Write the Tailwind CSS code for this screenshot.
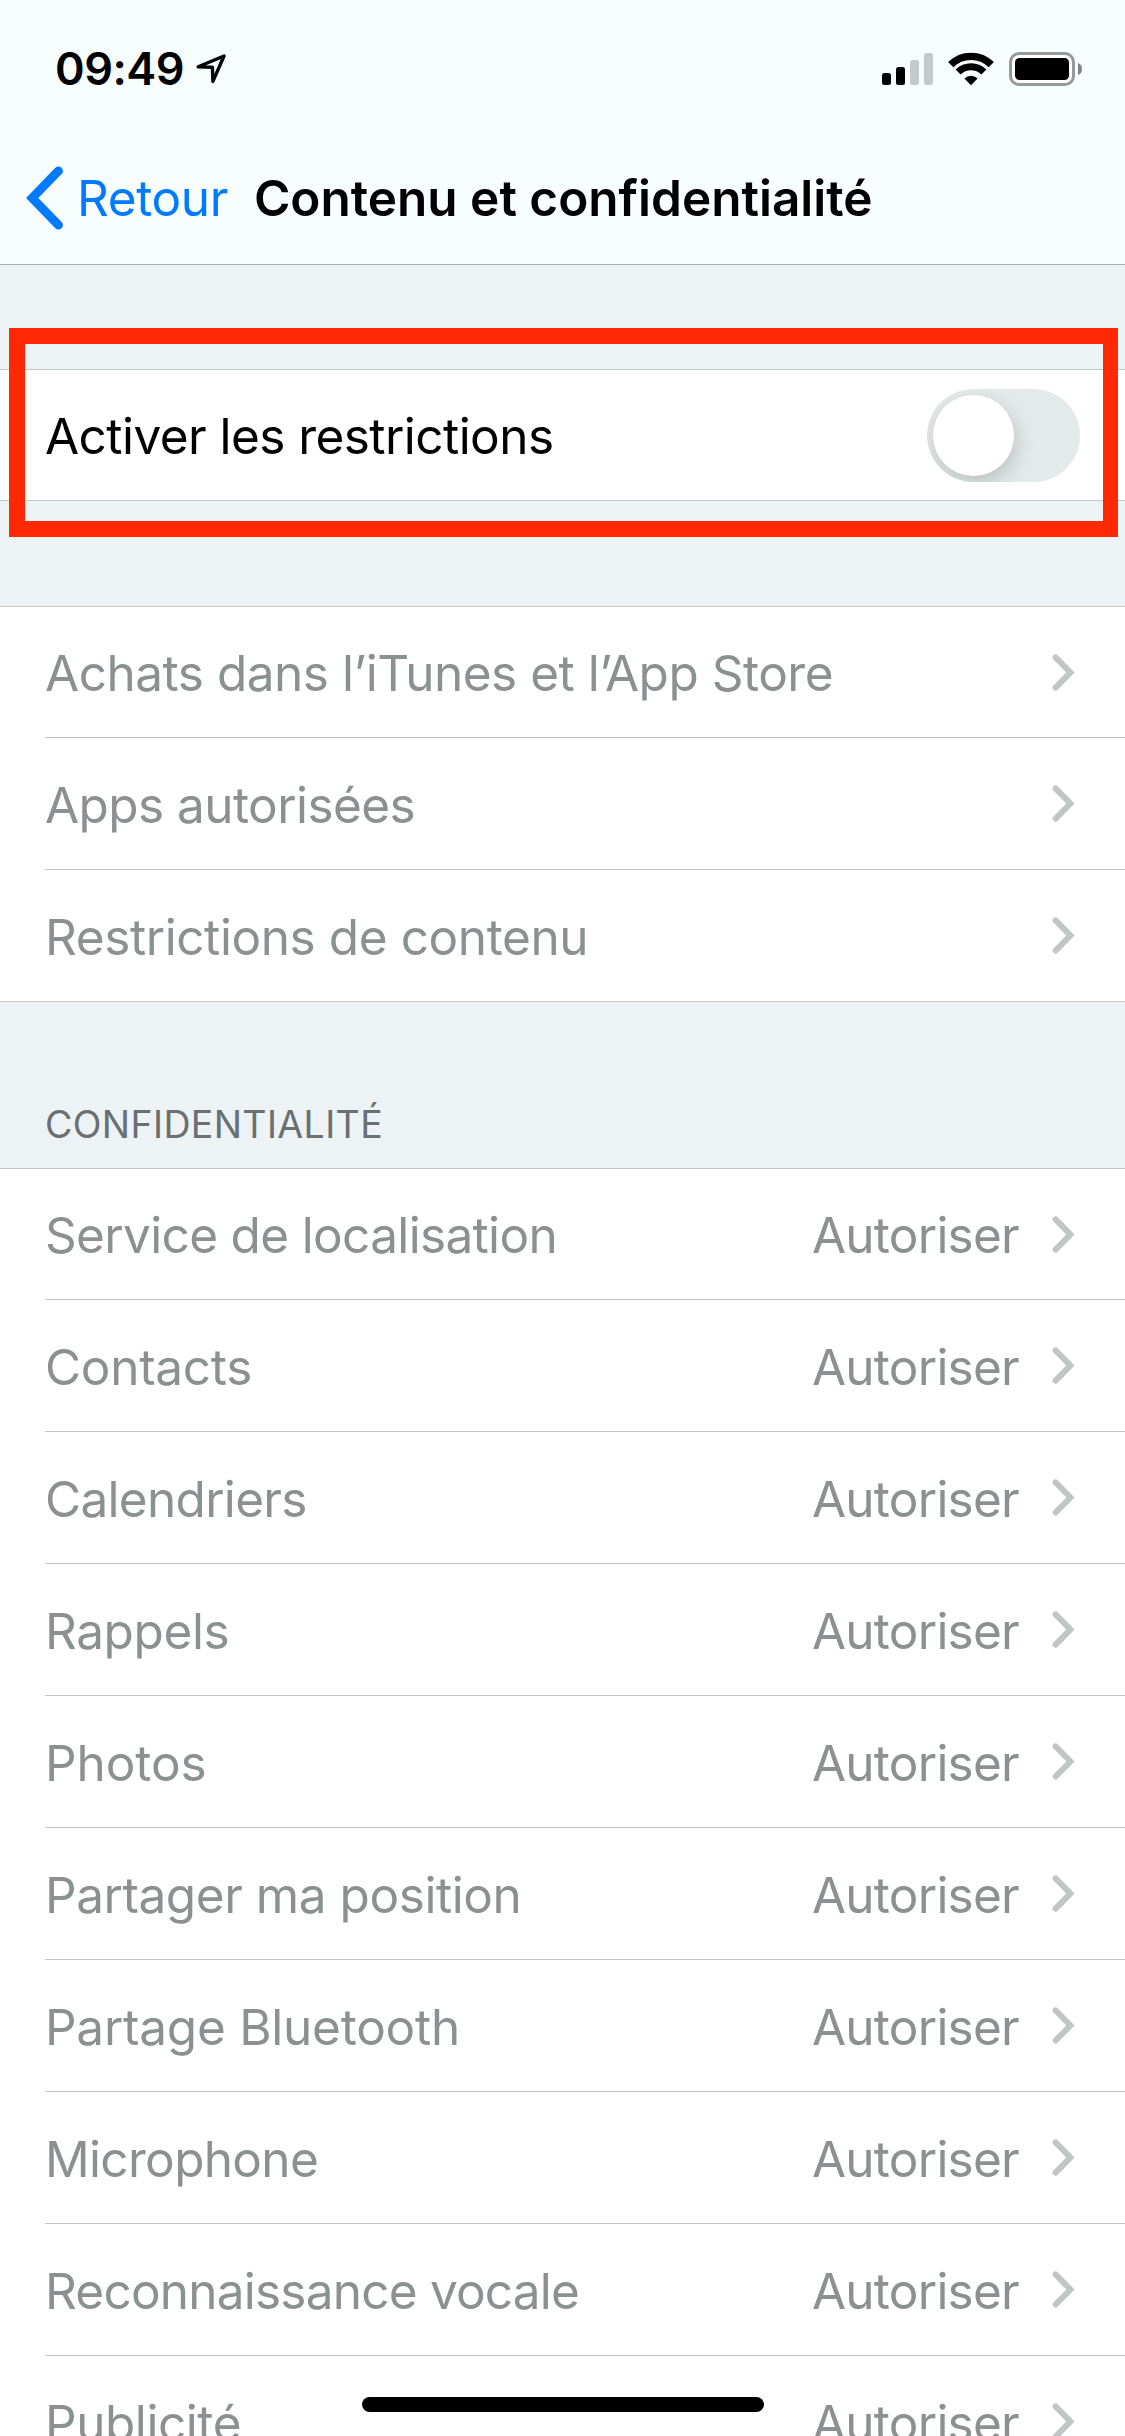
<!DOCTYPE html>
<html lang="fr">
<head>
<meta charset="utf-8">
<title>Contenu et confidentialité</title>
<script src="https://cdn.jsdelivr.net/npm/@tailwindcss/browser@4"></script>
</head>
<body class="bg-[#edf2f5]">
<div class="relative flex h-[2436px] w-[1125px] flex-col overflow-hidden bg-[#edf2f5] font-['Inter',sans-serif] text-[49.5px] whitespace-nowrap text-black">

  <header class="flex h-[265px] shrink-0 flex-col border-b border-[#a5acac] bg-[#f8fefe]">
    <!-- status bar -->
    <div class="flex h-[132px] items-start justify-between pt-[52px] pr-[43px] pl-[55px]">
      <div class="flex items-start">
        <span class="text-[45px] leading-[34px] font-semibold tracking-[-0.5px]">09:49</span>
        <svg class="mt-0.5 ml-[11px] h-[30px] w-[31px]" viewBox="0 0 31 30" fill="none" stroke="#000" stroke-width="3.4" stroke-linejoin="round"><path d="M3.2 12.8 29 2 17.9 27.4 17.4 13.2Z"/></svg>
      </div>
      <div class="flex items-start">
        <svg class="h-[34px] w-[51px]" viewBox="0 0 51 34"><g fill="#000"><rect x="0" y="21" width="9" height="12" rx="2.5"/><rect x="14" y="15" width="9" height="18" rx="2.5"/></g><g fill="#c4c9c9"><rect x="28" y="8" width="9" height="25" rx="2.5"/><rect x="42" y="1" width="9" height="32" rx="2.5"/></g></svg>
        <svg class="ml-[15px] h-[34px] w-[46px]" viewBox="0 0 46 34"><g fill="none" stroke="#000"><path stroke-width="7.4" d="M2.7 12.7a28.8 28.8 0 0 1 40.6 0"/><path stroke-width="7" d="M10.1 20a18.3 18.3 0 0 1 25.8 0"/></g><path d="M23 33.2 16.4 26.4a9.4 9.4 0 0 1 13.2 0Z"/></svg>
        <svg class="ml-[15px] h-[34px] w-[73px]" viewBox="0 0 73 34"><rect x="1.5" y="1.5" width="63" height="31" rx="8.5" fill="#fff" stroke="#949a9a" stroke-width="3"/><rect x="6" y="6" width="54" height="22" rx="4.5"/><path d="M69 11a6.5 6.5 0 0 1 0 12Z" fill="#7f8585"/></svg>
      </div>
    </div>
    <!-- navigation bar -->
    <div class="flex h-[132px] items-center pl-[26px]">
      <svg class="h-[64px] w-[38px]" viewBox="0 0 38 64" fill="none" stroke="#007aff" stroke-width="8.8" stroke-linecap="round"><path d="M32.5 4.9 6.2 32 32.5 59.1"/></svg>
      <span class="ml-[13px] tracking-[-0.4px] text-[#007aff]">Retour</span>
      <h1 class="ml-[26px] font-semibold">Contenu et confidentialité</h1>
    </div>
  </header>

  <section class="mt-[104px] flex h-[132px] shrink-0 items-center justify-between border-y border-[#c4c8cb] bg-white pr-[45px] pl-[45px]">
    <span class="pt-0.5 tracking-[-0.55px]">Activer les restrictions</span>
    <div class="flex h-[93px] w-[153px] items-center overflow-hidden rounded-full bg-[#e4e9e9] pl-1.5">
      <div class="size-[81px] rounded-full bg-white shadow-[2px_8px_20px_rgba(0,20,20,0.18)]"></div>
    </div>
  </section>

  <ul id="content" class="mt-[105px] shrink-0 border-y border-[#c1c5c5] bg-white pl-[45px] text-[#8b9191]"></ul>

  <h2 class="flex h-[166px] shrink-0 items-end pb-[20px] pl-[45px] text-[37.5px] leading-[46px] tracking-[0.37px] text-[#6a6f72]">CONFIDENTIALITÉ</h2>

  <ul id="privacy" class="shrink-0 border-t border-[#c1c5c5] bg-white pl-[45px] text-[#8b9191]"></ul>

  <!-- highlight around the main switch -->
  <div class="absolute top-[328px] left-[9px] h-[209px] w-[1109px] border-[16px] border-r-[15px] border-[#ff2a04]"></div>
  <!-- home indicator -->
  <div class="absolute top-[2397px] left-[362px] h-[15px] w-[402px] rounded-full bg-black"></div>
</div>

<script>
  const chevron = '<svg class="h-[37px] w-[23px]" viewBox="0 0 23 37" fill="none" stroke="#c0c5c5" stroke-width="6" stroke-linecap="round"><path d="M3.6 3.4 18.4 18.5 3.6 33.6"/></svg>';
  const row = ([label, tracking], value) => `
    <li class="flex h-[132px] items-center justify-between border-t border-[#c1c5c5] pr-[50px] first:h-[130px] first:border-t-0">
      <span class="pt-[3px] ${tracking}">${label}</span>
      <span class="flex items-center gap-[33px]">${value ? `<span class="pt-[3px] tracking-[-0.75px]">${value}</span>` : ''}${chevron}</span>
    </li>`;
  document.getElementById('content').innerHTML = [
    ['Achats dans l’iTunes et l’App Store', 'tracking-[-0.48px]'],
    ['Apps autorisées', 'tracking-[-0.57px]'],
    ['Restrictions de contenu', 'tracking-[-0.41px]'],
  ].map(r => row(r)).join('');
  document.getElementById('privacy').innerHTML = [
    ['Service de localisation', 'tracking-[-0.66px]'],
    ['Contacts', 'tracking-[-0.3px]'],
    ['Calendriers', 'tracking-[-0.7px]'],
    ['Rappels', 'tracking-[-0.4px]'],
    ['Photos', 'tracking-[-0.1px]'],
    ['Partager ma position', 'tracking-[-0.44px]'],
    ['Partage Bluetooth', 'tracking-[-0.25px]'],
    ['Microphone', 'tracking-[-0.67px]'],
    ['Reconnaissance vocale', 'tracking-[-0.78px]'],
    ['Publicité', 'tracking-[-0.44px]'],
  ].map(r => row(r, 'Autoriser')).join('');
</script>
</body>
</html>
